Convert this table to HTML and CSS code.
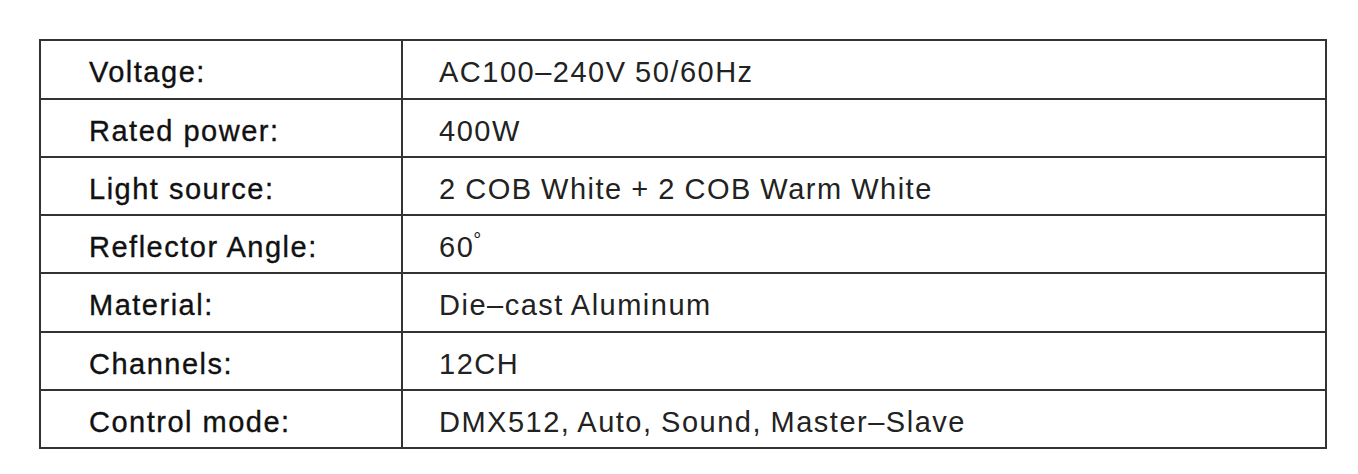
FILE: index.html
```html
<!DOCTYPE html>
<html lang="en">
<head>
<meta charset="utf-8">
<title>Specifications</title>
<link rel="stylesheet" href="styles.css">
</head>
<body>
<table class="spec">
  <tr><td class="label">Voltage:</td><td class="value">AC100–240V 50/60Hz</td></tr>
  <tr><td class="label">Rated power:</td><td class="value">400W</td></tr>
  <tr><td class="label">Light source:</td><td class="value">2 COB White + 2 COB Warm White</td></tr>
  <tr><td class="label">Reflector Angle:</td><td class="value">60<sup class="deg">°</sup></td></tr>
  <tr><td class="label">Material:</td><td class="value">Die–cast Aluminum</td></tr>
  <tr><td class="label">Channels:</td><td class="value">12CH</td></tr>
  <tr><td class="label">Control mode:</td><td class="value">DMX512, Auto, Sound, Master–Slave</td></tr>
</table>
</body>
</html>
```

FILE: styles.css
```css
html, body {
  margin: 0;
  padding: 0;
  background: #ffffff;
}

body {
  padding: 39px 0 0 39px;
  font-family: "Liberation Sans", Arial, sans-serif;
}

.spec {
  border-collapse: separate;
  border-spacing: 0;
  border: 2px solid #333333;
  width: 1288px;
  table-layout: fixed;
}

.spec td {
  height: 56.8px;
  padding: 6px 0 0 0;
  box-sizing: border-box;
  font-size: 29px;
  line-height: 30px;
  vertical-align: middle;
  white-space: nowrap;
}

.spec tr + tr td {
  height: 58.2px;
  border-top: 2px solid #333333;
}

.label {
  width: 362px;
  padding-left: 48px !important;
  border-right: 2px solid #333333;
  color: #111111;
  letter-spacing: 1.5px;
  -webkit-text-stroke: 0.35px #111111;
}

.value {
  padding-left: 36px !important;
  color: #222222;
  letter-spacing: 1.5px;
  word-spacing: -1px;
}

.deg {
  font-size: 20px;
  vertical-align: top;
  line-height: 0;
  position: relative;
  top: 8px;
  margin-left: -1px;
}
```
